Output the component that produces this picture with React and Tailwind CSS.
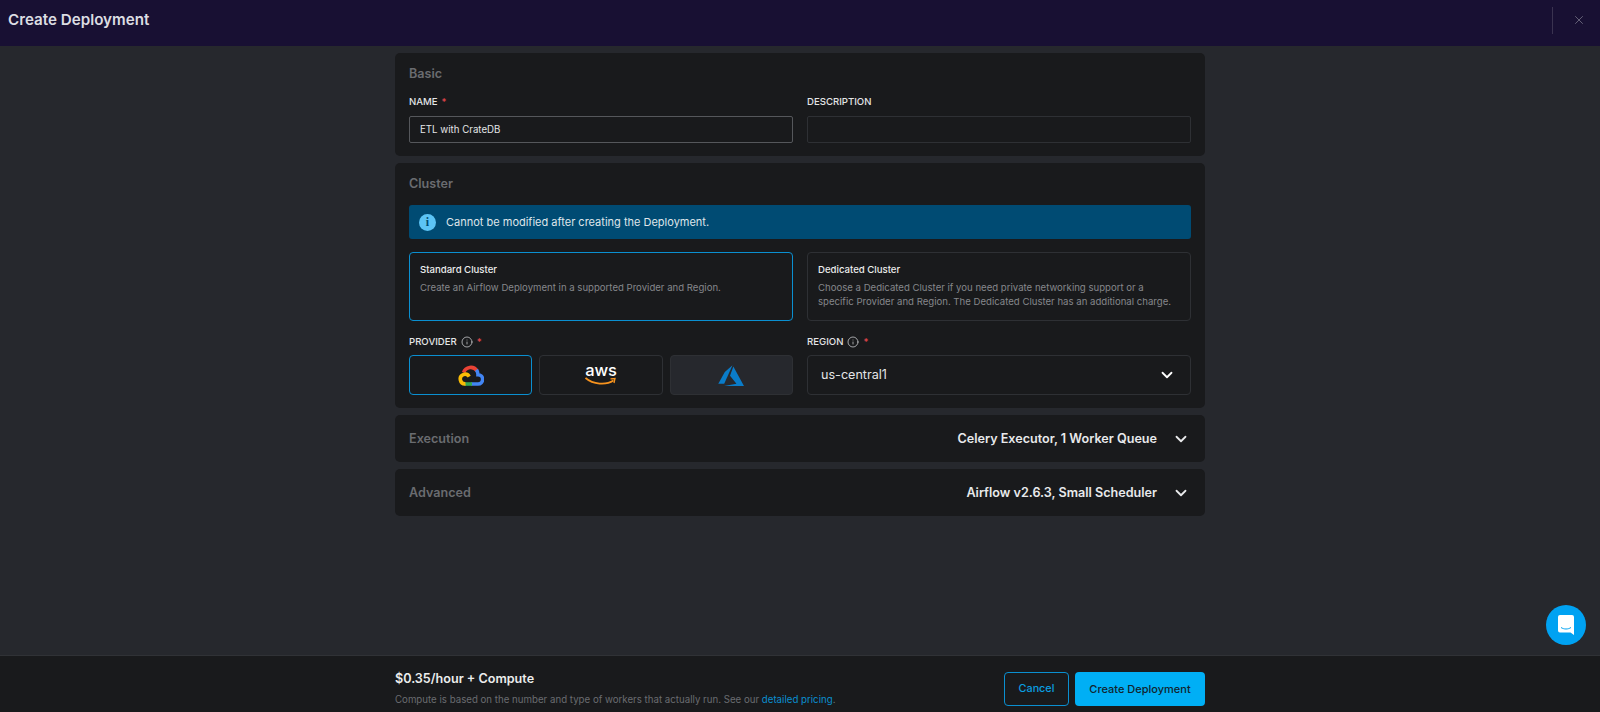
import { ChevronDown, Info, X } from 'lucide-react';

function GoogleCloudLogo() {
  return (
    <svg width="26" height="21" viewBox="0 0 26 21" fill="none">
      <path d="M5.6 7.5 A7.5 7.5 0 0 1 19 5.8" stroke="#ea4335" strokeWidth="3.6" />
      <path d="M18.4 4.9 A7.5 7.5 0 0 1 20 9.7 A4.4 4.4 0 0 1 20 19 H13" stroke="#4285f4" strokeWidth="3.6" />
      <path d="M14 19 H6.5" stroke="#34a853" strokeWidth="3.6" />
      <path d="M7.5 18.9 A4.8 4.8 0 1 1 11.2 11.6" stroke="#fbbc05" strokeWidth="3.6" />
    </svg>
  );
}

function AwsLogo() {
  return (
    <div className="flex flex-col items-center">
      <span className="font-['Inter',sans-serif] text-[16.5px] leading-[12px] font-medium tracking-[-0.2px] text-white">aws</span>
      <svg className="mt-[1px]" width="31" height="9" viewBox="0 0 31 9" fill="none">
        <path d="M0.5 1 C8 7.5 21 8.5 28.5 3.5" stroke="#f7931e" strokeWidth="1.7" />
        <path d="M25.5 1.8 L30 1.5 L29 6" stroke="#f7931e" strokeWidth="1.3" />
      </svg>
    </div>
  );
}

function AzureLogo() {
  return (
    <svg width="28" height="22" viewBox="0 0 22 17.8">
      <path d="M12.2 1 L6 6.4 L0.7 15.9 H5.5 Z" fill="#0a7cc9" />
      <path d="M12.9 2.1 L10.2 9.6 L15.4 16 L5.4 17.8 H21.5 Z" fill="#0a7cc9" />
    </svg>
  );
}

function FieldLabel({ children, hint, required }) {
  return (
    <div className="flex items-center text-[9.6px] leading-[14px] font-medium text-[#e4e5e7]">
      <span>{children}</span>
      {hint && <Info className="ml-[4px] text-[#d0d1d4]" size={12} strokeWidth={1.5} />}
      {required && <span className="ml-[4px] text-[#e5484d]">*</span>}
    </div>
  );
}

function Card({ title, children }) {
  return (
    <section className="rounded-[5px] bg-[#191a1c] px-[14px] pt-[14px] pb-[13px]">
      <h2 className="text-[12.6px] leading-[14px] font-semibold text-[#6a6c70]">{title}</h2>
      {children}
    </section>
  );
}

function CollapsedCard({ title, summary }) {
  return (
    <section className="flex h-[47px] items-center justify-between rounded-[5px] bg-[#191a1c] pt-[2px] pr-[15px] pl-[14px]">
      <h2 className="text-[12.6px] font-semibold text-[#6a6c70]">{title}</h2>
      <div className="flex items-center">
        <span className="text-[12.6px] font-semibold text-[#e8e9eb]">{summary}</span>
        <ChevronDown className="ml-[15px] text-[#e8e9eb]" size={18} strokeWidth={2.4} />
      </div>
    </section>
  );
}

function ClusterOption({ title, text, selected }) {
  return (
    <div className={`h-[69px] rounded-[4px] border px-[10px] pt-[10px] ${selected ? 'border-[#0a8fd0]' : 'border-[#2e3034]'}`}>
      <div className="text-[9.6px] leading-[14px] font-medium text-[#eceded]">{title}</div>
      <p className="mt-[4px] text-[9.6px] leading-[14.4px] text-[#85878b]">{text}</p>
    </div>
  );
}

export default function App() {
  return (
    <div className="flex h-screen flex-col bg-[#26282d] font-['Inter',sans-serif]">
      <header className="flex h-[46px] shrink-0 items-center justify-between bg-[#181033] pr-[14px] pb-[6px] pl-[8px]">
        <h1 className="text-[15.2px] font-semibold text-[#dcdde2]">Create Deployment</h1>
        <div className="flex items-center">
          <div className="h-[27px] w-px bg-[#3a3350]" />
          <X className="ml-[19px] text-[#6e6a80]" size={14} strokeWidth={1.5} />
        </div>
      </header>

      <main className="mx-auto flex w-[810px] flex-1 flex-col gap-[7px] pt-[7px]">
        <Card title="Basic">
          <div className="mt-[14px] grid grid-cols-2 gap-[14px]">
            <div>
              <FieldLabel required>NAME</FieldLabel>
              <div className="mt-[7px] flex h-[27px] items-center rounded-[2px] border border-[#55575b] px-[10px] pt-[1px] text-[9.7px] text-[#e4e5e7]">ETL with CrateDB</div>
            </div>
            <div>
              <FieldLabel>DESCRIPTION</FieldLabel>
              <div className="mt-[7px] h-[27px] rounded-[2px] border border-[#2e3034]" />
            </div>
          </div>
        </Card>

        <Card title="Cluster">
          <div className="mt-[14px] flex h-[34px] items-center rounded-[3px] bg-[#004b73] px-[10px]">
            <span className="flex h-[17px] w-[17px] items-center justify-center rounded-full bg-[#5cc4f5] font-['Liberation_Serif',serif] text-[12px] font-bold text-[#004b73]">i</span>
            <span className="ml-[10px] text-[11px] text-[#dfe5ea]">Cannot be modified after creating the Deployment.</span>
          </div>
          <div className="mt-[13px] grid grid-cols-2 gap-[14px]">
            <ClusterOption selected title="Standard Cluster" text="Create an Airflow Deployment in a supported Provider and Region." />
            <ClusterOption title="Dedicated Cluster" text="Choose a Dedicated Cluster if you need private networking support or a specific Provider and Region. The Dedicated Cluster has an additional charge." />
          </div>
          <div className="mt-[14px] grid grid-cols-2 gap-[14px]">
            <div>
              <FieldLabel hint required>PROVIDER</FieldLabel>
              <div className="mt-[6px] grid grid-cols-3 gap-[7px]">
                <div className="flex h-[40px] items-center justify-center rounded-[4px] border border-[#0a8fd0]"><GoogleCloudLogo /></div>
                <div className="flex h-[40px] items-center justify-center rounded-[4px] border border-[#2e3034]"><AwsLogo /></div>
                <div className="flex h-[40px] items-center justify-center rounded-[4px] border border-[#2e3034] bg-[#26282d]"><AzureLogo /></div>
              </div>
            </div>
            <div>
              <FieldLabel hint required>REGION</FieldLabel>
              <div className="mt-[6px] flex h-[40px] items-center justify-between rounded-[4px] border border-[#2e3034] pr-[14px] pl-[13px] text-[12.6px] text-[#e4e5e7]">
                <span>us-central1</span>
                <ChevronDown className="text-white" size={18} strokeWidth={2.4} />
              </div>
            </div>
          </div>
        </Card>

        <CollapsedCard title="Execution" summary="Celery Executor, 1 Worker Queue" />
        <CollapsedCard title="Advanced" summary="Airflow v2.6.3, Small Scheduler" />
      </main>

      <footer className="flex h-[57px] shrink-0 justify-center border-t border-[#303236] bg-[#191a1c]">
        <div className="flex w-[810px] items-start justify-between pt-[15px]">
          <div>
            <div className="text-[12.6px] leading-[16px] font-semibold text-[#eceded]">$0.35/hour + Compute</div>
            <p className="mt-[6px] text-[9.7px] leading-[13px] text-[#6a6c70]">
              Compute is based on the number and type of workers that actually run. See our <span className="text-[#0a8fd0]">detailed pricing</span>.
            </p>
          </div>
          <div className="mt-[1px] flex gap-[6px]">
            <button className="h-[34px] w-[65px] rounded-[4px] border border-[#0a8fd0] text-[10.8px] font-medium text-[#0a9fe0]">Cancel</button>
            <button className="h-[34px] w-[130px] rounded-[4px] bg-[#00aff5] text-[11px] font-medium text-[#12242e]">Create Deployment</button>
          </div>
        </div>
      </footer>

      <button className="fixed right-[14px] bottom-[67px] flex h-[40px] w-[40px] items-center justify-center rounded-full bg-[#00a2f2]">
        <svg width="16" height="20" viewBox="0 0 16 20">
          <path d="M2 0 H14 A2 2 0 0 1 16 2 V20 L12.5 17.5 H2 A2 2 0 0 1 0 15.5 V2 A2 2 0 0 1 2 0 Z" fill="#fff" />
          <path d="M3 12.5 C6 14.5 10 14.5 13 12.5" stroke="#00a2f2" strokeWidth="1" fill="none" />
        </svg>
      </button>
    </div>
  );
}
